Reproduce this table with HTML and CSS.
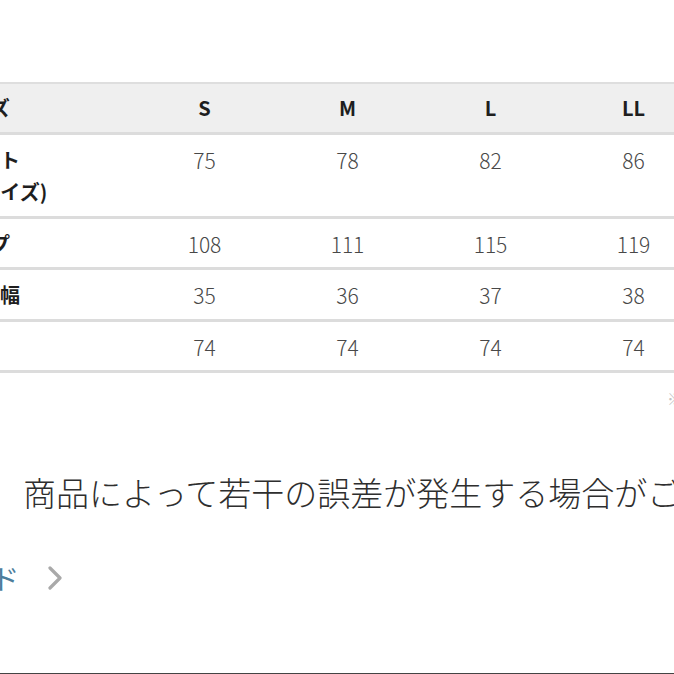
FILE: index.html
```html
<!DOCTYPE html>
<html lang="ja">
<head>
<meta charset="utf-8">
<title>サイズ表</title>
<link rel="stylesheet" href="styles.css">
</head>
<body>
<div class="page">
  <table class="size-table">
    <colgroup>
      <col class="col-label">
      <col class="col-size">
      <col class="col-size">
      <col class="col-size">
      <col class="col-size">
    </colgroup>
    <thead>
      <tr>
        <th class="label">サイズ</th>
        <th>S</th>
        <th>M</th>
        <th>L</th>
        <th>LL</th>
      </tr>
    </thead>
    <tbody>
      <tr>
        <th class="label">ウエスト<br>(ヌードサイズ)</th>
        <td>75</td><td>78</td><td>82</td><td>86</td>
      </tr>
      <tr>
        <th class="label">ヒップ</th>
        <td>108</td><td>111</td><td>115</td><td>119</td>
      </tr>
      <tr>
        <th class="label">わたり幅</th>
        <td>35</td><td>36</td><td>37</td><td>38</td>
      </tr>
      <tr>
        <th class="label">股下</th>
        <td>74</td><td>74</td><td>74</td><td>74</td>
      </tr>
    </tbody>
  </table>
  <p class="note">※単位：cm</p>
  <p class="desc">商品によって若干の誤差が発生する場合がございます。</p>
  <div class="guide">
    <a class="guide-link" href="#">サイズガイド</a>
    <svg class="chev" width="16" height="24" viewBox="0 0 16 24" aria-hidden="true">
      <path d="M3 2 L13 12 L3 22" fill="none" stroke="#a9a9a9" stroke-width="3.2" stroke-linecap="round" stroke-linejoin="round"/>
    </svg>
  </div>
  <div class="bottom-rule"></div>
</div>
</body>
</html>
```
FILE: styles.css
```css
html, body {
  margin: 0;
  padding: 0;
  background: #fff;
}
body {
  width: 674px;
  height: 674px;
  overflow: hidden;
  font-family: "Noto Sans CJK JP", "Noto Sans", sans-serif;
  color: #333;
}
.page {
  padding-top: 82px;
  width: 674px;
}
.size-table {
  margin-left: -173px;
  width: 878px;
  border-collapse: collapse;
  table-layout: fixed;
  border-top: 2px solid #dedede;
}
.col-label { width: 306px; }
.col-size { width: 143px; }
.size-table th,
.size-table td {
  text-align: center;
  vertical-align: top;
  line-height: 32.5px;
  padding: 9px 0 7px;
  border-bottom: 3px solid #dcdcdc;
}
.size-table thead th {
  background: #efefef;
  font-weight: 700;
  font-size: 20px;
  color: #1e1e1e;
  padding: 8px 0 7px;
}
.size-table tbody th {
  font-weight: 700;
  font-size: 20px;
  color: #1e1e1e;
}
.size-table td {
  font-weight: 300;
  font-size: 21px;
  color: #484848;
}
.note {
  margin: 11px 0 0;
  padding-left: 667px;
  white-space: nowrap;
  font-size: 16px;
  line-height: 28px;
  color: #c4c4c4;
}
.desc {
  margin: 58px 0 0;
  padding-left: 23px;
  white-space: nowrap;
  font-size: 33px;
  line-height: 44px;
  font-weight: 300;
  color: #2e2e2e;
}
.guide {
  margin-top: 46px;
  height: 36px;
  display: flex;
  align-items: center;
  gap: 28px;
  margin-left: -148px;
}
.guide-link {
  font-size: 28px;
  line-height: 36px;
  color: #4c7d9c;
  text-decoration: none;
  font-weight: 400;
  white-space: nowrap;
}
.chev {
  flex: none;
}
.bottom-rule {
  margin-top: 77px;
  border-top: 2px solid #444;
}
```
